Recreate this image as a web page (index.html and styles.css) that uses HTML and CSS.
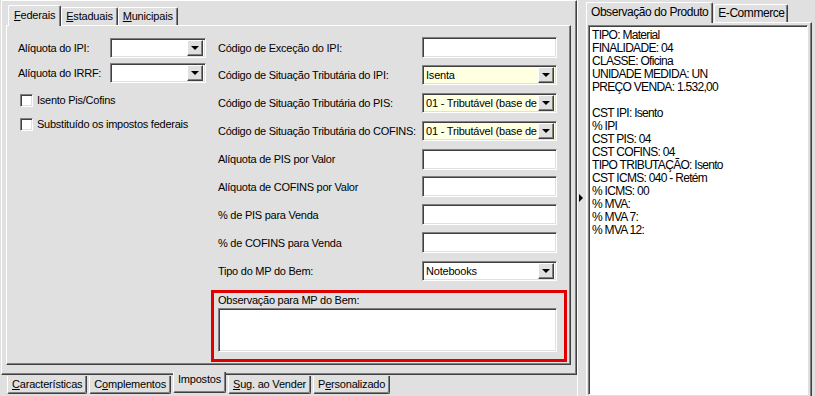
FILE: index.html
```html
<!DOCTYPE html>
<html lang="pt-BR">
  <head>
    <meta charset="UTF-8" />
    <title>Impostos</title>
    <link rel="stylesheet" href="styles.css">
  </head>
  <body>
    <div class="window">
      <div class="main">
        <div class="page-frame">
          <div class="tabs top-tabs">
            <div class="tab active"><u>F</u>ederais</div>
            <div class="tab"><u>E</u>staduais</div>
            <div class="tab"><u>M</u>unicipais</div>
          </div>
          <div class="tab-page">
            <div class="col-left">
              <div class="lrow">
                <span class="label">Alíquota do IPI:</span>
                <div class="combo small"><span class="val"></span><span class="drop"></span></div>
              </div>
              <div class="lrow">
                <span class="label">Alíquota do IRRF:</span>
                <div class="combo small"><span class="val"></span><span class="drop"></span></div>
              </div>
              <label class="check first"><span class="box"></span>Isento Pis/Cofins</label>
              <label class="check"><span class="box"></span>Substituído os impostos federais</label>
            </div>

            <div class="col-right">
              <div class="row">
                <span class="label">Código de Exceção do IPI:</span>
                <div class="field"></div>
              </div>
              <div class="row">
                <span class="label">Código de Situação Tributária do IPI:</span>
                <div class="combo yellow"><span class="val">Isenta</span><span class="drop"></span></div>
              </div>
              <div class="row">
                <span class="label">Código de Situação Tributária do PIS:</span>
                <div class="combo yellow"><span class="val">01 - Tributável (base de</span><span class="drop"></span></div>
              </div>
              <div class="row">
                <span class="label">Código de Situação Tributária do COFINS:</span>
                <div class="combo yellow"><span class="val">01 - Tributável (base de</span><span class="drop"></span></div>
              </div>
              <div class="row">
                <span class="label">Alíquota de PIS por Valor</span>
                <div class="field"></div>
              </div>
              <div class="row">
                <span class="label">Alíquota de COFINS por Valor</span>
                <div class="field"></div>
              </div>
              <div class="row">
                <span class="label">% de PIS para Venda</span>
                <div class="field"></div>
              </div>
              <div class="row">
                <span class="label">% de COFINS para Venda</span>
                <div class="field"></div>
              </div>
              <div class="row">
                <span class="label">Tipo do MP do Bem:</span>
                <div class="combo"><span class="val">Notebooks</span><span class="drop"></span></div>
              </div>

              <div class="mp-group">
                <div class="label">Observação para MP do Bem:</div>
                <div class="field memo-field"></div>
              </div>
            </div>
          </div>
        </div>

        <div class="tabs bottom-tabs">
          <div class="tab"><u>C</u>aracterísticas</div>
          <div class="tab">C<u>o</u>mplementos</div>
          <div class="tab active">Impostos</div>
          <div class="tab"><u>S</u>ug. ao Vender</div>
          <div class="tab">P<u>e</u>rsonalizado</div>
        </div>
      </div>

      <div class="splitter"><span class="grip"></span></div>

      <div class="side">
        <div class="tabs side-tabs">
          <div class="tab active">Observação do Produto</div>
          <div class="tab">E-Commerce</div>
        </div>
        <div class="side-page">
          <div class="memo">
            <div>TIPO: Material</div>
            <div>FINALIDADE: 04</div>
            <div>CLASSE: Oficina</div>
            <div>UNIDADE MEDIDA: UN</div>
            <div>PREÇO VENDA: 1.532,00</div>
            <div>&nbsp;</div>
            <div>CST IPI: Isento</div>
            <div>% IPI</div>
            <div>CST PIS: 04</div>
            <div>CST COFINS: 04</div>
            <div>TIPO TRIBUTAÇÃO: Isento</div>
            <div>CST ICMS: 040 - Retém</div>
            <div>% ICMS: 00</div>
            <div>% MVA:</div>
            <div>% MVA 7:</div>
            <div>% MVA 12:</div>
          </div>
        </div>
      </div>
    </div>
  </body>
</html>
```

FILE: styles.css
```css
* {
  margin: 0;
  padding: 0;
  box-sizing: border-box;
}

body {
  font-family: "Liberation Sans", Arial, sans-serif;
  font-size: 11px;
  color: #000;
  background: #e0e0e0;
}

u {
  text-decoration: underline;
  text-underline-offset: 1px;
}

.window {
  display: flex;
  width: 815px;
  height: 396px;
  overflow: hidden;
}

/* ---------- left area ---------- */

.main {
  width: 577px;
  display: flex;
  flex-direction: column;
}

.page-frame {
  height: 375px;
  padding: 4px 5px 0 4px;
  border-top: 1px solid #fff;
  border-left: 1px solid #fff;
  border-right: 1px solid #404040;
  border-bottom: 1px solid #404040;
  box-shadow: inset -1px -1px 0 #808080;
  margin-left: 1px;
}

.tabs {
  display: flex;
  align-items: flex-end;
}

.tab {
  background: #e0e0e0;
  border-top: 1px solid #fff;
  border-left: 1px solid #fff;
  border-right: 1px solid #404040;
  box-shadow: inset -1px 0 0 #808080;
  border-radius: 2px 2px 0 0;
  height: 18px;
  line-height: 16px;
  padding: 0 4px;
  white-space: nowrap;
  letter-spacing: -0.2px;
}

.tab.active {
  height: 21px;
  line-height: 19px;
  margin-bottom: -1px;
  position: relative;
  z-index: 1;
  padding: 0 5px;
}

.top-tabs .tab.active {
  margin-left: 2px;
}

.tab-page {
  height: 340px;
  display: flex;
  padding: 11px 0 0 11px;
  border-top: 1px solid #fff;
  border-left: 1px solid #fff;
  border-right: 1px solid #404040;
  border-bottom: 1px solid #404040;
  box-shadow: inset -1px -1px 0 #808080;
}

.col-left {
  width: 188px;
  display: flex;
  flex-direction: column;
}

.lrow {
  display: flex;
  align-items: center;
  justify-content: space-between;
  height: 20px;
  margin-top: 1px;
  margin-bottom: 4px;
}

.col-right {
  width: 339px;
  margin-left: 12px;
  display: flex;
  flex-direction: column;
}

.row {
  display: flex;
  align-items: center;
  justify-content: space-between;
  height: 21px;
  margin-bottom: 6.9px;
}

.label {
  white-space: nowrap;
  letter-spacing: -0.25px;
}

/* sunken controls */
.field,
.combo,
.box {
  background: #fff;
  border: 1px solid;
  border-color: #808080 #fff #fff #808080;
  box-shadow: inset 1px 1px 0 #404040, inset -1px -1px 0 #e0e0e0;
}

.field {
  width: 135px;
  height: 21px;
}

.combo {
  width: 135px;
  height: 20px;
  display: flex;
  align-items: center;
  padding: 2px 2px 2px 3px;
}

.combo.small {
  width: 96px;
}

.combo.yellow {
  background: #ffffe1;
}

.combo .val {
  flex: 1;
  overflow: hidden;
  white-space: nowrap;
  letter-spacing: -0.2px;
  line-height: 14px;
}

.drop {
  width: 16px;
  height: 16px;
  background: #e0e0e0;
  border-top: 1px solid #fff;
  border-left: 1px solid #fff;
  border-right: 1px solid #404040;
  border-bottom: 1px solid #404040;
  box-shadow: inset -1px -1px 0 #808080;
  display: flex;
  align-items: center;
  justify-content: center;
}

.drop::after {
  content: "";
  border-left: 4px solid transparent;
  border-right: 4px solid transparent;
  border-top: 4px solid #000;
  margin-right: 1px;
}

.check {
  display: flex;
  align-items: center;
  height: 14px;
  margin-left: 2px;
  margin-bottom: 10px;
  letter-spacing: -0.25px;
}

.check.first {
  margin-top: 6px;
}

.check .box {
  width: 13px;
  height: 13px;
  margin-right: 4px;
}

.mp-group {
  margin-top: 2px;
  margin-left: -7px;
  width: 356px;
  height: 72px;
  border: 3px solid #e00000;
  padding: 1px 0 0 4px;
}

.mp-group .label {
  line-height: 12px;
  margin-bottom: 2px;
}

.memo-field {
  width: 339px;
  height: 44px;
}

.bottom-tabs {
  align-items: flex-start;
  padding-left: 7px;
}

.bottom-tabs .tab {
  border-top: none;
  border-bottom: 1px solid #404040;
  border-radius: 0 0 2px 2px;
  box-shadow: inset -1px -1px 0 #808080;
  height: 18px;
  line-height: 17px;
  margin-top: 1px;
  margin-right: 2px;
  padding: 0 4px;
}

.bottom-tabs .tab.active {
  margin-top: -3px;
  height: 21px;
  line-height: 14px;
  margin-bottom: 0;
}

/* ---------- splitter ---------- */

.splitter {
  width: 7px;
  display: flex;
  align-items: center;
  justify-content: center;
  border-left: 1px solid #fff;
}

.grip {
  width: 0;
  height: 0;
  border-top: 4px solid transparent;
  border-bottom: 4px solid transparent;
  border-left: 4px solid #000;
}

/* ---------- right panel ---------- */

.side {
  flex: 1;
  display: flex;
  flex-direction: column;
  padding: 2px 3px 0 2px;
}

.side-tabs .tab {
  font-size: 12px;
  letter-spacing: -0.45px;
  padding: 0 3px;
}

.side-tabs .tab.active {
  padding: 0 4px;
  margin-right: 1px;
}

.side-page {
  flex: 1;
  padding: 2px 3px 0 1px;
  border-top: 1px solid #fff;
  border-left: 1px solid #fff;
  border-right: 1px solid #404040;
  box-shadow: inset -1px 0 0 #808080;
}

.memo {
  height: 370px;
  background: #fff;
  border: 1px solid;
  border-color: #808080 #fff #fff #808080;
  box-shadow: inset 1px 1px 0 #404040;
  padding: 3px 0 0 3px;
  font-size: 12px;
  line-height: 13px;
  letter-spacing: -0.7px;
}
```
